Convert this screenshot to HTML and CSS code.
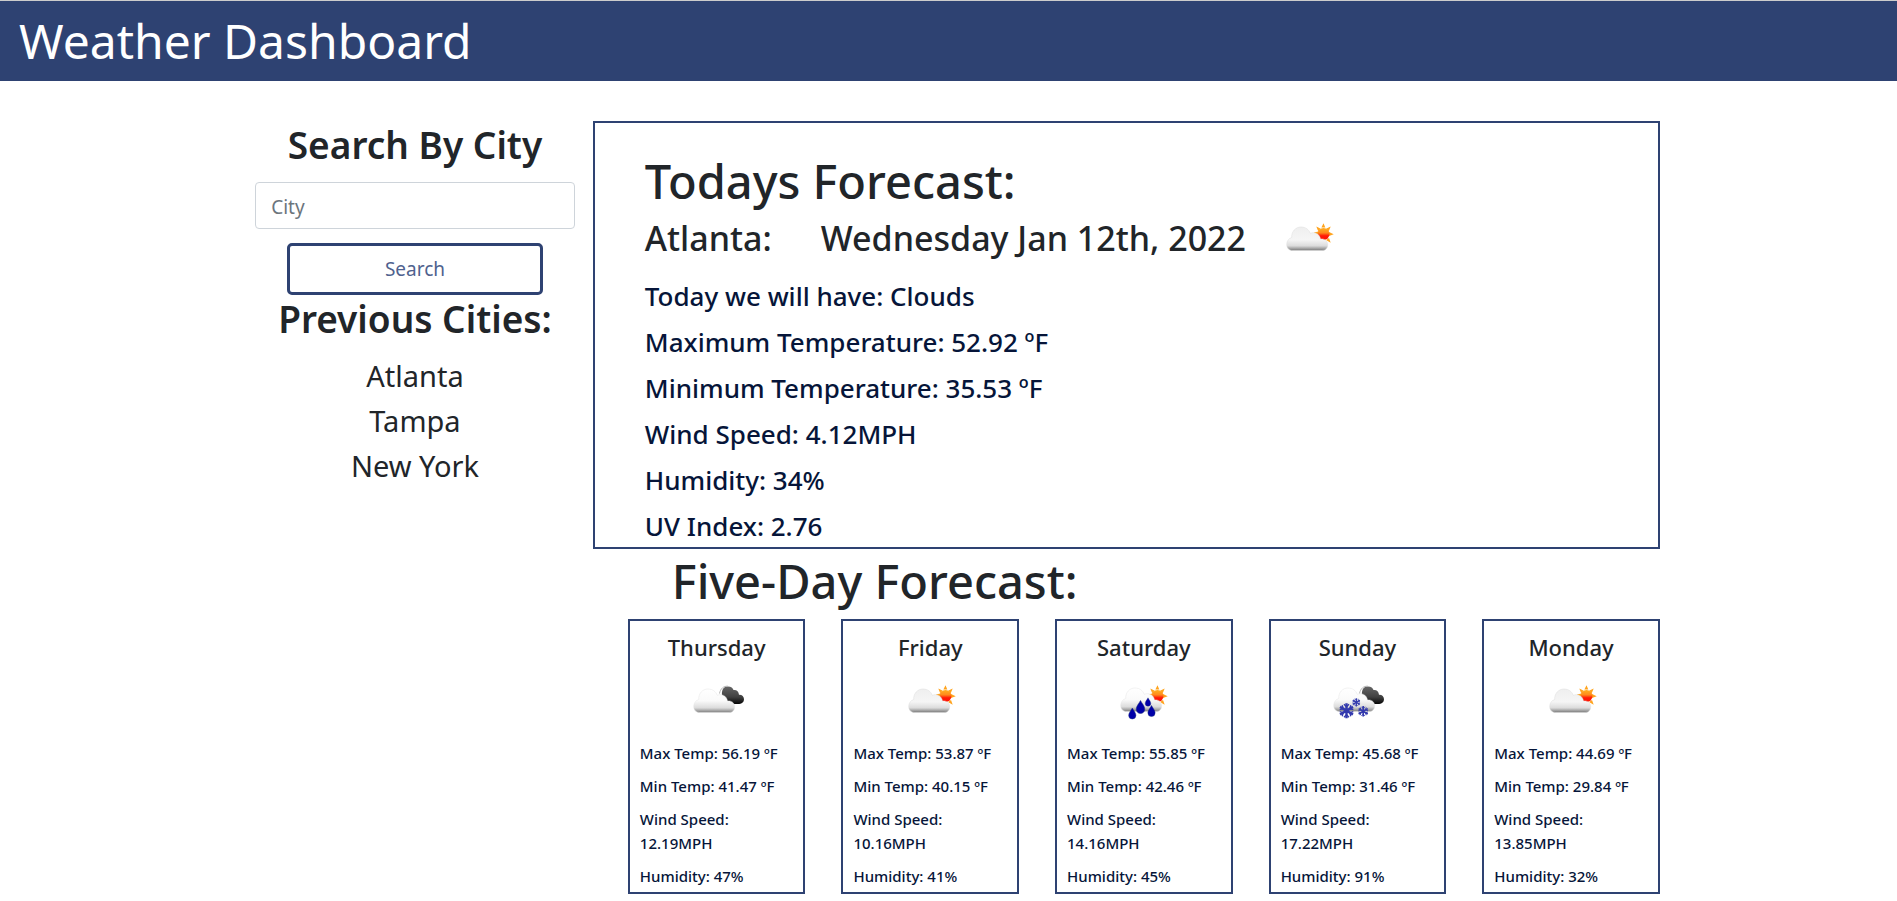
FILE: index.html
```html
<!DOCTYPE html>
<html lang="en">
<head>
<meta charset="utf-8">
<meta name="viewport" content="width=device-width, initial-scale=1">
<title>Weather Dashboard</title>
<link rel="stylesheet" href="styles.css">
</head>
<body>
<svg class="defs" aria-hidden="true">
  <defs>
    <linearGradient id="cloudFill" x1="0" y1="0" x2="0" y2="1">
      <stop offset="0" stop-color="#efefef"/><stop offset=".55" stop-color="#f5f5f5"/><stop offset=".8" stop-color="#dcdcdc"/><stop offset=".93" stop-color="#9c9c9c"/><stop offset="1" stop-color="#777"/>
    </linearGradient>
    <linearGradient id="whiteFill" x1="0" y1="0" x2="0" y2="1">
      <stop offset="0" stop-color="#fff"/><stop offset=".5" stop-color="#fafafa"/><stop offset=".8" stop-color="#dcdcdc"/><stop offset=".93" stop-color="#a0a0a0"/><stop offset="1" stop-color="#7c7c7c"/>
    </linearGradient>
    <linearGradient id="darkFill" x1="0" y1="0" x2="0" y2="1">
      <stop offset="0" stop-color="#666"/><stop offset=".6" stop-color="#414141"/><stop offset="1" stop-color="#050505"/>
    </linearGradient>
    <linearGradient id="sunFill" x1="0" y1="0" x2="0" y2="1">
      <stop offset="0" stop-color="#ffb020"/><stop offset=".4" stop-color="#ff8a1c"/><stop offset=".65" stop-color="#ff1a08"/><stop offset="1" stop-color="#ff1200"/>
    </linearGradient>
    <path id="cloudShape" d="M7.500 37.500C4 37.500 1.700 35 1.700 31.500C1.700 28 3.700 25.500 6.700 24.500C6.500 18.500 10.500 14 16 14C20.500 14 24 16.500 25.200 20.300C29.500 18.500 34.500 20.500 35.500 26C39.500 25.500 42.700 28 42.700 31.700C42.700 35.200 40.500 37.500 37 37.500Z"/>
    <g id="sun">
      <path fill="#ffa41e" d="M36.400 14.500L38.500 10.300L40.300 14.500ZM41 15.700L45.700 13.400L43.700 18.200ZM44 19L48.700 21.200L44 23.100ZM44 25L45.700 29.800L41 27ZM33.200 18.200L31.300 13.400L35.800 15.700ZM33 22L28.700 19.500L33.500 18.500Z"/>
      <circle cx="38.500" cy="21" r="6" fill="url(#sunFill)"/>
    </g>
    <g id="night">
      <path fill="url(#darkFill)" d="M30 20C29.500 15 31.500 12 35 11.500C38.500 11 41 13 41.500 15C44.500 14.500 46.700 16.500 47 19.700C50 19.500 52 21.700 52 24.300C52 27 50 29 47.300 29H37Z"/>
      <path fill="none" stroke="#b5b5b5" d="M27.500 18.500C28.500 13.500 31.500 11 36 11.200"/>
    </g>
    <path id="drop" fill="#0000a8" stroke="#1c2f78" stroke-width=".5" d="M0 -6.500C1.500 -3.500 4.300 -.8 4.300 2.200A4.300 4.300 0 0 1 -4.300 2.200C-4.300 -.8 -1.500 -3.500 0 -6.500Z"/>
    <g id="flake" fill="none" stroke="#3239ad" stroke-width="2.400">
      <path d="M0-7.500V7.500M-6.500-3.800L6.500 3.800M-6.500 3.800L6.500-3.800"/>
      <path stroke-width="1.400" d="M-2.500-6.500L0-4L2.500-6.500M-2.500 6.500L0 4L2.500 6.500M-6.800-1L-3.300-2L-4.300-5.500M6.800 1L3.300 2L4.300 5.500M-6.800 1L-3.300 2L-4.300 5.500M6.800-1L3.300-2L4.300-5.500"/>
    </g>
    <symbol id="few-clouds" viewBox="-2 0 50 50" overflow="visible"><use href="#sun"/><use href="#cloudShape" fill="url(#cloudFill)" stroke="#ddd" stroke-width=".5"/></symbol>
    <symbol id="broken-clouds" viewBox="0 0 50 50" overflow="visible"><use href="#night"/><use href="#cloudShape" fill="url(#whiteFill)" stroke="#e4e4e4" stroke-width=".5"/></symbol>
    <symbol id="rain" viewBox="0 0 50 50"><use href="#sun"/><use href="#cloudShape" y="-1" fill="url(#whiteFill)" stroke="#e4e4e4" stroke-width=".5"/>
      <use href="#drop" transform="translate(13.300 38.500) scale(.85)"/><use href="#drop" transform="translate(21.500 32)"/><use href="#drop" transform="translate(29 27) scale(.65)"/><use href="#drop" transform="translate(32.500 36) scale(.85)"/></symbol>
    <symbol id="snow" viewBox="0 0 50 50" overflow="visible"><use href="#night"/><use href="#cloudShape" y="-1" fill="url(#whiteFill)" stroke="#e4e4e4" stroke-width=".5"/>
      <use href="#flake" transform="translate(14.500 35.700)"/><use href="#flake" transform="translate(24.300 27.300) scale(.55)"/><use href="#flake" transform="translate(31.200 36.300) scale(.7)"/></symbol>
  </defs>
</svg>

<header class="site-header"><h1 class="site-title">Weather Dashboard</h1></header>

<main class="container">
  <aside class="sidebar">
    <form class="search">
      <h2 class="side-title"><label for="city">Search By City</label></h2>
      <input class="city-input" id="city" type="text" placeholder="City">
      <button class="search-button" type="button">Search</button>
    </form>
    <h2 class="side-title">Previous Cities:</h2>
    <ul class="cities"><li>Atlanta</li><li>Tampa</li><li>New York</li></ul>
  </aside>

  <div class="forecast">
    <section class="today">
      <h2 class="section-title">Todays Forecast:</h2>
      <div class="today-head">
        <h3 class="today-city">Atlanta:</h3>
        <h3 class="today-date">Wednesday Jan 12th, 2022</h3>
        <svg class="icon" role="img" aria-label="Clouds"><use href="#few-clouds"/></svg>
      </div>
      <div class="today-stats">
        <p>Today we will have: Clouds</p>
        <p>Maximum Temperature: 52.92 ºF</p>
        <p>Minimum Temperature: 35.53 ºF</p>
        <p>Wind Speed: 4.12MPH</p>
        <p>Humidity: 34%</p>
        <p>UV Index: 2.76</p>
      </div>
    </section>

    <section class="five-day">
      <h2 class="section-title five-day-title">Five-Day Forecast:</h2>
      <div class="cards">
        <article class="card">
          <h4 class="card-day">Thursday</h4>
          <svg class="icon" role="img" aria-label="Broken clouds"><use href="#broken-clouds"/></svg>
          <div class="card-stats"><p>Max Temp: 56.19 ºF</p><p>Min Temp: 41.47 ºF</p><p>Wind Speed: 12.19MPH</p><p>Humidity: 47%</p></div>
        </article>
        <article class="card">
          <h4 class="card-day">Friday</h4>
          <svg class="icon" role="img" aria-label="Few clouds"><use href="#few-clouds"/></svg>
          <div class="card-stats"><p>Max Temp: 53.87 ºF</p><p>Min Temp: 40.15 ºF</p><p>Wind Speed: 10.16MPH</p><p>Humidity: 41%</p></div>
        </article>
        <article class="card">
          <h4 class="card-day">Saturday</h4>
          <svg class="icon" role="img" aria-label="Rain"><use href="#rain"/></svg>
          <div class="card-stats"><p>Max Temp: 55.85 ºF</p><p>Min Temp: 42.46 ºF</p><p>Wind Speed: 14.16MPH</p><p>Humidity: 45%</p></div>
        </article>
        <article class="card">
          <h4 class="card-day">Sunday</h4>
          <svg class="icon" role="img" aria-label="Snow"><use href="#snow"/></svg>
          <div class="card-stats"><p>Max Temp: 45.68 ºF</p><p>Min Temp: 31.46 ºF</p><p>Wind Speed: 17.22MPH</p><p>Humidity: 91%</p></div>
        </article>
        <article class="card">
          <h4 class="card-day">Monday</h4>
          <svg class="icon" role="img" aria-label="Few clouds"><use href="#few-clouds"/></svg>
          <div class="card-stats"><p>Max Temp: 44.69 ºF</p><p>Min Temp: 29.84 ºF</p><p>Wind Speed: 13.85MPH</p><p>Humidity: 32%</p></div>
        </article>
      </div>
    </section>
  </div>
</main>
</body>
</html>
```
FILE: styles.css
```css
:root {
  --navy: #2e4272;
  --ink: #212529;
  --deep: #061539;
}

* { box-sizing: border-box; }

body {
  margin: 0;
  background: #fff;
  color: var(--ink);
  font-family: "Noto Sans", sans-serif;
}

h1, h2, h3, h4, p, ul { margin: 0; padding: 0; font-weight: 500; }

.defs { display: block; width: 0; height: 0; }

.site-header {
  border-top: 1px solid #ccc;
  background: var(--navy);
  padding: 10px 19px;
}

.site-title {
  color: #fff;
  font-size: 48px;
  font-weight: 400;
  line-height: 60px;
}

.container {
  display: grid;
  grid-template-columns: 1fr 3fr;
  width: 75%;
  margin: 40px auto 0;
}

.sidebar {
  padding: 0 18px;
  text-align: center;
}

.search {
  display: flex;
  flex-direction: column;
  align-items: center;
}

.side-title {
  margin-bottom: 11px;
  font-size: 37px;
  font-weight: 600;
  line-height: 47px;
}

.city-input {
  width: 100%;
  height: 47px;
  margin: 3px 0 14px;
  padding: 2px 15px 0;
  border: 1px solid #ced4da;
  border-radius: 4px;
  color: var(--ink);
  font: inherit;
  font-size: 19px;
}

.city-input::placeholder { color: #6c757d; opacity: 1; }

.search-button {
  width: 80%;
  height: 52px;
  border: 3px solid var(--navy);
  border-radius: 5px;
  background: #fff;
  color: #4f628e;
  font: inherit;
  font-size: 19px;
}

.cities {
  list-style: none;
  font-size: 29px;
  line-height: 45px;
}

.cities li { font-weight: 400; }

.section-title { font-size: 47px; line-height: 56px; }

.today {
  border: 2px solid var(--navy);
  padding: 30px 50px 3px;
}

.today-head {
  display: flex;
  align-items: center;
  font-size: 34px;
  line-height: 58px;
}

.today-city, .today-date { font-size: inherit; }
.today-city { margin-right: 49px; }
.today-date { margin-right: 37px; }

.icon {
  width: 50px;
  height: 50px;
  overflow: visible;
}

.today-stats {
  display: grid;
  gap: 10px;
  margin-top: 11px;
  color: var(--deep);
  font-size: 26px;
  line-height: 36px;
}

.five-day-title { margin: 4px 0 10px 79px; }

.cards {
  display: grid;
  grid-template-columns: repeat(5, 1fr);
  gap: 36px;
  margin-left: 35px;
}

.card {
  display: flex;
  flex-direction: column;
  align-items: center;
  border: 2px solid var(--navy);
  padding: 12px 10px 4px;
}

.card-day { font-size: 22px; line-height: 28px; }

.card .icon { margin: 14px 0 16px; }

.card-stats {
  display: grid;
  gap: 9px;
  width: 100%;
  color: var(--deep);
  font-size: 15px;
  line-height: 24px;
}
```
